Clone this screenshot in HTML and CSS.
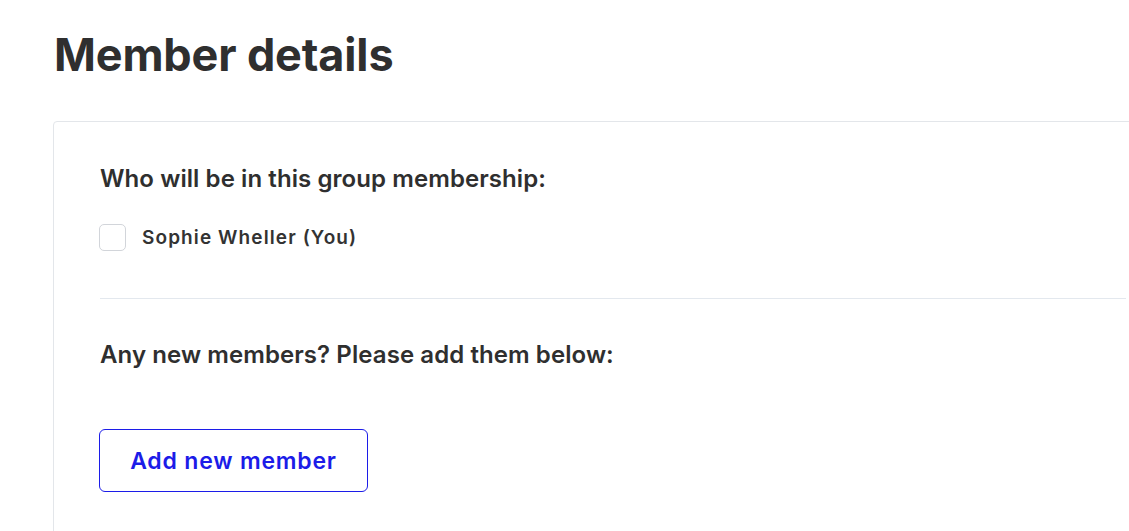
FILE: index.html
```html
<!DOCTYPE html>
<html>
<head>
<meta charset="utf-8">
<link rel="stylesheet" href="styles.css">
</head>
<body>
<main class="page">
  <h1 class="title">Member details</h1>
  <section class="card">
    <h2 class="question">Who will be in this group membership:</h2>
    <label class="member">
      <span class="box"></span>
      <span class="name">Sophie Wheller (You)</span>
    </label>
    <hr class="divider">
    <h2 class="question second">Any new members? Please add them below:</h2>
    <button class="add-btn" type="button">Add new member</button>
  </section>
</main>
</body>
</html>
```

FILE: styles.css
```css
html, body {
  margin: 0;
  padding: 0;
  background: #ffffff;
  overflow: hidden;
}
body {
  font-family: Inter, "Liberation Sans", sans-serif;
  color: #2f2f2f;
}
.page {
  padding: 27px 0 0 53px;
}
.title {
  margin: 0;
  font-size: 45px;
  font-weight: 700;
  line-height: 56px;
  color: #2f2f2f;
  padding-left: 1px;
  letter-spacing: -0.15px;
}
.card {
  margin-top: 38px;
  width: 1026px;
  border: 1px solid #e3e6ea;
  border-radius: 4px;
  padding: 41px 46px 60px 46px;
}
.question {
  margin: 0;
  font-size: 24px;
  font-weight: 600;
  line-height: 32px;
  letter-spacing: 0.08px;
  color: #2f2f2f;
}
.member {
  display: flex;
  align-items: center;
  gap: 16px;
  margin-top: 29px;
}
.box {
  width: 25px;
  height: 25px;
  border: 1px solid #d2d5da;
  border-radius: 5px;
  background: #fff;
  margin-left: -1px;
}
.name {
  font-size: 19px;
  font-weight: 600;
  letter-spacing: 1.1px;
  color: #333;
}
.divider {
  border: 0;
  border-top: 1px solid #e3e8ee;
  margin: 47px 0 0 0;
}
.second {
  margin-top: 40px;
}
.add-btn {
  margin-top: 58px;
  margin-left: -1px;
  width: 269px;
  height: 63px;
  border: 1px solid #1c1ce8;
  border-radius: 6px;
  background: #fff;
  color: #1c1ce8;
  font-family: Inter, "Liberation Sans", sans-serif;
  font-size: 23px;
  font-weight: 600;
  letter-spacing: 0.8px;
  cursor: pointer;
}
```
